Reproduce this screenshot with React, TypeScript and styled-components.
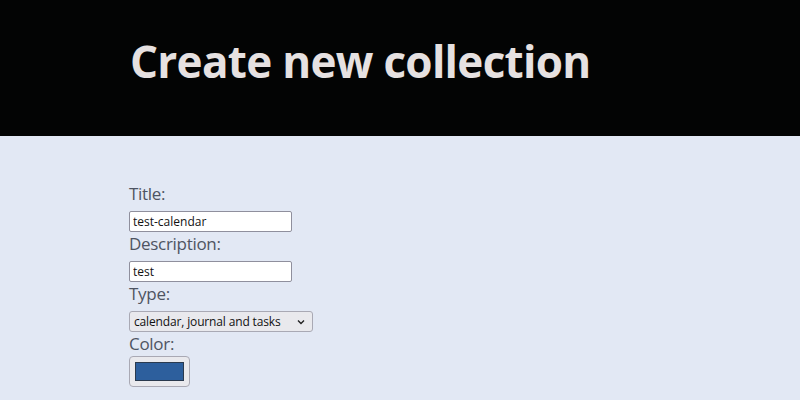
import React from "react";
import styled, { createGlobalStyle } from "styled-components";

const GlobalStyle = createGlobalStyle`
  html, body {
    margin: 0;
    padding: 0;
    background: #e2e8f4;
    font-family: "Open Sans", "Noto Sans", sans-serif;
  }
`;

const Header = styled.header`
  background: #030404;
  height: 136px;
  padding-left: 130px;
  box-sizing: border-box;
  display: flex;
  align-items: center;
`;

const Heading = styled.h1`
  margin: 0 0 14px;
  font-size: 44px;
  font-weight: 700;
  color: #e6e1e1;
  letter-spacing: -0.7px;
`;

const Form = styled.form`
  padding: 47px 0 0 129px;
  display: flex;
  flex-direction: column;
  align-items: flex-start;
`;

const Field = styled.div`
  display: flex;
  flex-direction: column;
  align-items: flex-start;
  margin-bottom: 1px;
`;

const Label = styled.label<{ $gap?: number }>`
  display: block;
  font-size: 17px;
  line-height: 22px;
  letter-spacing: -0.3px;
  color: #4e5462;
  margin-bottom: ${(p) => p.$gap ?? 6}px;
`;

const TextInput = styled.input`
  width: 163px;
  height: 21px;
  box-sizing: border-box;
  font-family: "Open Sans", "Noto Sans", sans-serif;
  font-size: 12px;
  padding: 1px 3px;
  border: 1px solid #8f8f9d;
  border-radius: 2px;
  background: #fff;
  color: #111;
  outline: none;
`;

const Select = styled.select`
  appearance: none;
  -webkit-appearance: none;
  width: 184px;
  height: 21px;
  box-sizing: border-box;
  padding: 0 20px 0 4px;
  font-family: "Open Sans", "Noto Sans", sans-serif;
  font-size: 12px;
  letter-spacing: -0.15px;
  color: #111;
  background-color: #e9e9ed;
  background-image: url("data:image/svg+xml,%3Csvg xmlns='http://www.w3.org/2000/svg' width='8' height='6' viewBox='0 0 8 6'%3E%3Cpath d='M1 1.5l3 3 3-3' fill='none' stroke='%23222' stroke-width='1.4'/%3E%3C/svg%3E");
  background-repeat: no-repeat;
  background-position: right 7px center;
  border: 1px solid #a9a9b4;
  border-radius: 3px;
  outline: none;
`;

const ColorInput = styled.input`
  -webkit-appearance: none;
  appearance: none;
  width: 61px;
  height: 31px;
  margin: 0;
  padding: 5px 5px;
  box-sizing: border-box;
  background: #e9e9ed;
  border: 1px solid #a9a9b4;
  border-radius: 4px;
  cursor: pointer;

  &::-webkit-color-swatch-wrapper {
    padding: 0;
  }
  &::-webkit-color-swatch {
    border: 1px solid #2a3a4e;
    border-radius: 0;
  }
`;

export default function App() {
  return (
    <>
      <GlobalStyle />
      <Header>
        <Heading>Create new collection</Heading>
      </Header>
      <Form>
        <Field>
          <Label htmlFor="title">Title:</Label>
          <TextInput id="title" defaultValue="test-calendar" />
        </Field>
        <Field>
          <Label htmlFor="description">Description:</Label>
          <TextInput id="description" defaultValue="test" />
        </Field>
        <Field>
          <Label htmlFor="type">Type:</Label>
          <Select id="type" defaultValue="all">
            <option value="all">calendar, journal and tasks</option>
            <option value="cal">calendar</option>
            <option value="journal">journal</option>
            <option value="tasks">tasks</option>
          </Select>
        </Field>
        <Field>
          <Label htmlFor="color" $gap={1}>
            Color:
          </Label>
          <ColorInput id="color" type="color" defaultValue="#2d5f9d" />
        </Field>
      </Form>
    </>
  );
}
